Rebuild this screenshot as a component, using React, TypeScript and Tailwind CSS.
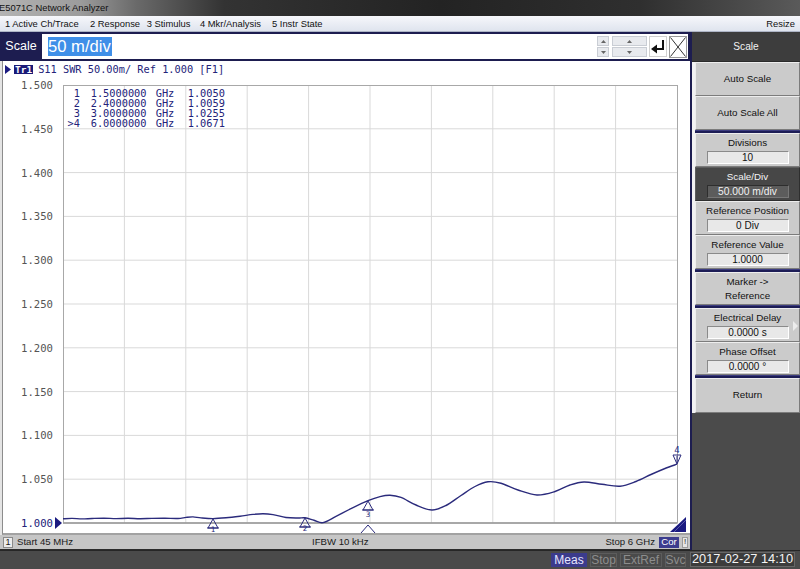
import React from 'react';

type P = [number, number];

const NAVY = '#2b2b7c';

// trace in page coordinates, shifted into the chart svg below
const trace: P[] = [
  [63, 518.8], [72, 518.4], [82, 518.9], [92, 518.5], [104, 518.2], [116, 518.6], [128, 518.3],
  [140, 518.7], [152, 518.4], [165, 518.3], [178, 518.5], [186, 517.4], [193, 516.9], [201, 517.9],
  [213, 518.6], [226, 517.8], [240, 516.2], [253, 514.4], [263, 513.7], [273, 514.6], [286, 517.5],
  [298, 518.0], [305, 517.8], [314, 520.2], [323, 522.6], [336, 516.4], [352, 508.2], [368, 500.7],
  [380, 496.6], [390, 495.2], [401, 497.4], [416, 505], [432, 510], [446, 505.5], [461, 495.5],
  [475, 486.5], [488, 481.8], [501, 483.2], [518, 490], [537, 495], [555, 491.5], [570, 485],
  [584, 482], [602, 484.3], [620, 486.2], [636, 481.5], [651, 474.5], [665, 468.5], [677, 464.2],
];

const sx = (x: number) => x - 53;
const sy = (y: number) => y - 80;

function smoothPath(pts: P[]) {
  const p = pts.map(([x, y]) => [sx(x), sy(y)] as P);
  let d = `M${p[0][0]},${p[0][1]}`;
  for (let i = 0; i < p.length - 1; i++) {
    const p0 = p[i - 1] || p[i];
    const p1 = p[i];
    const p2 = p[i + 1];
    const p3 = p[i + 2] || p2;
    const c1x = p1[0] + (p2[0] - p0[0]) / 6;
    const c1y = p1[1] + (p2[1] - p0[1]) / 6;
    const c2x = p2[0] - (p3[0] - p1[0]) / 6;
    const c2y = p2[1] - (p3[1] - p1[1]) / 6;
    d += ` C${c1x.toFixed(2)},${c1y.toFixed(2)} ${c2x.toFixed(2)},${c2y.toFixed(2)} ${p2[0]},${p2[1]}`;
  }
  return d;
}

const yLabels = ['1.500', '1.450', '1.400', '1.350', '1.300', '1.250', '1.200', '1.150', '1.100', '1.050', '1.000'];

const markerRows = [
  ['1', '1.5000000', 'GHz', '1.0050'],
  ['2', '2.4000000', 'GHz', '1.0059'],
  ['3', '3.0000000', 'GHz', '1.0255'],
  ['>4', '6.0000000', 'GHz', '1.0671'],
];

const menu = [
  { t: '1 Active Ch/Trace', w: 'w-[85px]' },
  { t: '2 Response', w: 'w-[56.7px]' },
  { t: '3 Stimulus', w: 'w-[53.3px]' },
  { t: '4 Mkr/Analysis', w: 'w-[72px]' },
  { t: '5 Instr State', w: 'w-[60px]' },
];

const UpMarker = ({ x, y, n, dy = 16 }: { x: number; y: number; n: string; dy?: number }) => (
  <g stroke={NAVY} fill="none" strokeWidth={1}>
    <path d={`M${sx(x)},${sy(y)} L${sx(x) - 5},${sy(y) + 9} L${sx(x) + 5},${sy(y) + 9} Z`} />
    <line x1={sx(x) - 6} y1={sy(y) + 9} x2={sx(x) + 6} y2={sy(y) + 9} />
    <text x={sx(x)} y={sy(y) + dy} fill={NAVY} stroke="none" fontSize="7.5" textAnchor="middle" fontFamily="DejaVu Sans Mono, monospace">
      {n}
    </text>
  </g>
);

const Chart = () => {
  const vx = Array.from({ length: 9 }, (_, i) => 10 + (i + 1) * 61.4);
  const hy = Array.from({ length: 9 }, (_, i) => 5 + (i + 1) * 43.8);
  return (
    <svg width={637} height={453} className="block shrink-0">
      {vx.map((x) => (
        <line key={x} x1={x} y1={5} x2={x} y2={443} stroke="#d9d9d9" strokeWidth={1} />
      ))}
      {hy.map((y) => (
        <line key={y} x1={10} y1={y} x2={624} y2={y} stroke="#d9d9d9" strokeWidth={1} />
      ))}
      <rect x={10.5} y={5.5} width={614} height={437.5} fill="none" stroke="#a8a8a8" strokeWidth={1} />
      <line x1={10} y1={443} x2={624} y2={443} stroke="#9a9a9a" strokeWidth={1.5} />
      <path d={smoothPath(trace)} fill="none" stroke={NAVY} strokeWidth={1.4} />
      <UpMarker x={213} y={519} n="1" dy={13} />
      <UpMarker x={305} y={518} n="2" dy={13} />
      <UpMarker x={368} y={501} n="3" />
      <path d={`M${sx(368) - 7},${sy(533)} L${sx(368)},${sy(525)} L${sx(368) + 7},${sy(533)}`} fill="none" stroke={NAVY} strokeWidth={1} />
      <g stroke={NAVY} fill="none" strokeWidth={1}>
        <path d={`M${sx(677)},${sy(464)} L${sx(677) - 4},${sy(455)} L${sx(677) + 4},${sy(455)} Z`} />
        <line x1={sx(677)} y1={sy(456)} x2={sx(677)} y2={sy(463)} />
        <text x={sx(677)} y={sy(453)} fill={NAVY} stroke="none" fontSize="9" textAnchor="middle" fontFamily="DejaVu Sans Mono, monospace">
          4
        </text>
      </g>
      <path d="M2,437 L9,443 L2,449 Z" fill="#1a1a80" />
      <path d="M617,452 L633,452 L633,437 Z" fill="#1a1a80" />
      <line x1={621} y1={452} x2={633} y2={440} stroke="#6a6ab8" strokeWidth={0.8} />
    </svg>
  );
};

const ValueBox = ({ v, dark }: { v: string; dark?: boolean }) => (
  <div
    className={
      dark
        ? 'w-[82px] h-[13px] bg-[#5c5c5c] border border-t-[#2e2e2e] border-l-[#2e2e2e] border-b-[#777] border-r-[#777] text-[#f2f2f2] text-center leading-[11px] text-[10.3px]'
        : 'w-[82px] h-[13px] bg-[#e8e8e8] border border-t-[#8a8a8a] border-l-[#8a8a8a] border-b-white border-r-white text-[#111] text-center leading-[11px] text-[10px]'
    }
  >
    {v}
  </div>
);

const btn = 'relative flex flex-col items-center justify-center bg-[#cbcbcb] border border-t-[#ededed] border-l-[#ededed] border-b-[#7c7c7c] border-r-[#7c7c7c] text-[#111] text-[9.8px]';

const Sep = () => <div className="h-[3px] bg-[#1d1d56] border-t border-[#3c3c80]" />;

const FieldBtn = ({ label, value, h, dark }: { label: string; value: string; h: string; dark?: boolean }) => (
  <div
    className={
      dark
        ? `relative flex flex-col items-center justify-center bg-[#474747] border border-t-[#5e5e5e] border-l-[#5e5e5e] border-b-[#2e2e2e] border-r-[#2e2e2e] text-[#f4f4f4] text-[9.8px] ${h}`
        : `${btn} ${h}`
    }
  >
    <div className="leading-[13px] mb-[2px]">{label}</div>
    <ValueBox v={value} dark={dark} />
  </div>
);

export default function App() {
  return (
    <div className="w-[800px] h-[569px] overflow-hidden flex flex-col bg-[#4a4a4a] font-['Liberation_Sans',Arial,sans-serif]">
      {/* title bar */}
      <div className="h-[16px] shrink-0 flex items-center bg-[linear-gradient(to_right,#b3b3b3_0%,#9c9c9c_10%,#6a6a6a_17%,#333_28%,#232323_55%,#2f2f2f_80%,#5a5a5a_100%)] text-[9.4px] text-[#111] leading-none">
        <span className="-ml-[1px]">E5071C Network Analyzer</span>
      </div>

      {/* menu bar */}
      <div className="h-[16px] shrink-0 flex items-center bg-[linear-gradient(#f6f7fb,#dfe4ee)] border-b border-[#aeb5c6] text-[9.4px] text-[#111] leading-none">
        <div className="flex pl-[5px]">
          {menu.map((m) => (
            <span key={m.t} className={`${m.w} whitespace-nowrap`}>
              {m.t}
            </span>
          ))}
        </div>
        <span className="ml-auto mr-[5px]">Resize</span>
      </div>

      {/* main */}
      <div className="h-[518px] shrink-0 flex">
        {/* left column */}
        <div className="w-[690px] flex flex-col">
          {/* entry bar */}
          <div className="h-[29px] shrink-0 bg-[#1d1d50] flex">
            <div className="w-[42px] flex items-center justify-center text-white text-[12.5px]">Scale</div>
            <div className="flex-1 my-[2px] mr-[2px] bg-white flex items-center">
              <span className="ml-[6px] bg-[#3f8fe8] text-white text-[16.6px] leading-[19px] pr-[1px]">50 m/div</span>
              <div className="ml-auto mr-[1px] flex items-center">
                <div className="w-[12px] h-[21px] flex flex-col gap-[1px]">
                  <div className="flex-1 bg-[#e8eaee] border border-[#c9cdd4] flex items-center justify-center">
                    <svg width="5" height="3"><path d="M0,3 L2.5,0 L5,3 Z" fill="#666" /></svg>
                  </div>
                  <div className="flex-1 bg-[#e8eaee] border border-[#c9cdd4] flex items-center justify-center">
                    <svg width="5" height="3"><path d="M0,0 L2.5,3 L5,0 Z" fill="#666" /></svg>
                  </div>
                </div>
                <div className="ml-[3px] w-[35px] h-[21px] flex flex-col gap-[1px]">
                  <div className="flex-1 bg-[#e8eaee] border border-[#c9cdd4] flex items-center justify-center">
                    <svg width="5" height="3"><path d="M0,3 L2.5,0 L5,3 Z" fill="#666" /></svg>
                  </div>
                  <div className="flex-1 bg-[#e8eaee] border border-[#c9cdd4] flex items-center justify-center">
                    <svg width="5" height="3"><path d="M0,0 L2.5,3 L5,0 Z" fill="#666" /></svg>
                  </div>
                </div>
                <div className="ml-[2px] w-[18px] h-[21px] border border-[#d0d0d0] bg-white">
                  <svg width="16" height="19">
                    <path d="M13,3 V12 H6" fill="none" stroke="#111" strokeWidth="2" />
                    <path d="M1,12 L7,7.5 L7,16.5 Z" fill="#111" />
                  </svg>
                </div>
                <div className="ml-[2px] w-[18px] h-[22px] border border-[#9a9a9a] bg-white">
                  <svg width="16" height="20">
                    <path d="M0.5,0.5 L15.5,19.5 M15.5,0.5 L0.5,19.5" stroke="#333" strokeWidth="1" />
                  </svg>
                </div>
              </div>
            </div>
          </div>

          {/* graph panel */}
          <div className="h-[474px] shrink-0 bg-[#e4e4e4] pl-[2px]">
            <div className="h-full bg-white border-l border-[#8c8c8c] border-b-2 border-b-[#a2a2a2] flex flex-col">
              <div className="h-[19px] shrink-0 pt-[3px] flex items-start font-['DejaVu_Sans_Mono',monospace] text-[10.3px] leading-[11px]">
                <svg width="6" height="9" className="ml-[2px] mt-[1px]"><path d="M0,0 L6,4.5 L0,9 Z" fill="#1a1a80" /></svg>
                <span className="ml-[3px] mt-[1px] h-[9px] px-[1px] bg-[#1a1a78] text-white font-bold text-[9.5px] leading-[9px]">Tr1</span>
                <span className="ml-[5px] text-[#23237a] whitespace-pre">S11 SWR 50.00m/ Ref 1.000 [F1]</span>
              </div>
              <div className="relative flex-1 flex">
                <div className="w-[50px] shrink-0 -mt-[1px] flex flex-col items-end font-['DejaVu_Sans_Mono',monospace] text-[10.6px]">
                  {yLabels.map((l, i) => (
                    <div
                      key={l}
                      className={i === 10 ? 'h-[12px] leading-[12px] text-[#23237a]' : 'h-[43.8px] leading-[12px] text-[#555]'}
                    >
                      {l}
                    </div>
                  ))}
                </div>
                <Chart />
                <div className="absolute left-[60px] top-[8px] flex flex-col font-['DejaVu_Sans_Mono',monospace] text-[10.3px] leading-[10px] text-[#23237a] whitespace-pre">
                  {markerRows.map((r) => (
                    <div key={r[0]} className="h-[10px] flex">
                      <span className="w-[17px] text-right">{r[0]}</span>
                      <span className="w-[75.7px] pl-[10.7px]">{r[1]}</span>
                      <span className="w-[32px]">{r[2]}</span>
                      <span>{r[3]}</span>
                    </div>
                  ))}
                </div>
              </div>
            </div>
          </div>

          {/* channel status */}
          <div className="h-[15px] shrink-0 bg-[#c6c6c6] border-b border-[#2c2c2c] flex items-center text-[9.6px] text-[#1a1a1a] leading-none">
            <span className="ml-[3px] w-[10px] h-[11px] bg-[#ececec] border border-[#8a8a8a] flex items-center justify-center text-[9px]">1</span>
            <span className="ml-[4px] w-[295px]">Start 45 MHz</span>
            <span>IFBW 10 kHz</span>
            <span className="ml-auto">Stop 6 GHz</span>
            <span className="ml-[4px] w-[20px] h-[11px] bg-[#3c3c8e] text-white flex items-center justify-center">Cor</span>
            <span className="ml-[3px] mr-[2px] w-[6px] h-[11px] bg-[#e6e6e6] border border-[#9a9a9a] flex items-center justify-center text-[8px]">!</span>
          </div>
        </div>

        {/* right softkey panel */}
        <div className="w-[110px] flex flex-col border-l-2 border-[#1d1d50] bg-[#4b4b4b]">
          <div className="h-[30px] shrink-0 bg-[#3d3d3d] border-b border-[#2a2a2a] flex items-center justify-center text-[#f2f2f2] text-[10.2px]">
            Scale
          </div>
          <div className="flex flex-col border-l-[3px] border-[#f2f2f2] bg-[#9a9a9a]">
            <div className={`${btn} h-[34px]`}>Auto Scale</div>
            <div className={`${btn} h-[34px]`}>Auto Scale All</div>
            <Sep />
            <FieldBtn label="Divisions" value="10" h="h-[34px]" />
            <FieldBtn label="Scale/Div" value="50.000 m/div" h="h-[34px]" dark />
            <FieldBtn label="Reference Position" value="0 Div" h="h-[34px]" />
            <FieldBtn label="Reference Value" value="1.0000" h="h-[34px]" />
            <Sep />
            <div className={`${btn} h-[33px] leading-[14px]`}>
              <div>Marker -&gt;</div>
              <div>Reference</div>
            </div>
            <Sep />
            <div className="relative">
              <FieldBtn label="Electrical Delay" value="0.0000 s" h="h-[34px]" />
              <svg width="5" height="10" className="absolute right-[2px] top-[13px]">
                <path d="M0,0 L5,5 L0,10 Z" fill="#ececec" />
              </svg>
            </div>
            <FieldBtn label="Phase Offset" value="0.0000 °" h="h-[33px]" />
            <Sep />
            <div className={`${btn} h-[35px]`}>Return</div>
          </div>
          <div className="flex-1 bg-[#4b4b4b]" />
        </div>
      </div>

      {/* bottom status bar */}
      <div className="h-[18px] shrink-0 bg-[#4a4a4a] border-t border-[#262626] flex items-center justify-end pr-[5px] text-[12px] leading-none">
        <span className="w-[36px] h-[14px] bg-[#3b3b8c] text-[#e6e6ff] flex items-center justify-center">Meas</span>
        <span className="ml-[3px] w-[27px] h-[14px] border border-[#5c5c5c] text-[#8d8d8d] flex items-center justify-center">Stop</span>
        <span className="ml-[3px] w-[42px] h-[14px] border border-[#5c5c5c] text-[#8d8d8d] flex items-center justify-center">ExtRef</span>
        <span className="ml-[3px] w-[21px] h-[14px] border border-[#5c5c5c] text-[#8d8d8d] flex items-center justify-center">Svc</span>
        <span className="ml-[4px] w-[105px] h-[15px] bg-[#3c3c3c] border border-[#666] text-[#f4f4f4] text-[12.8px] flex items-center justify-center">
          2017-02-27 14:10
        </span>
      </div>
    </div>
  );
}
